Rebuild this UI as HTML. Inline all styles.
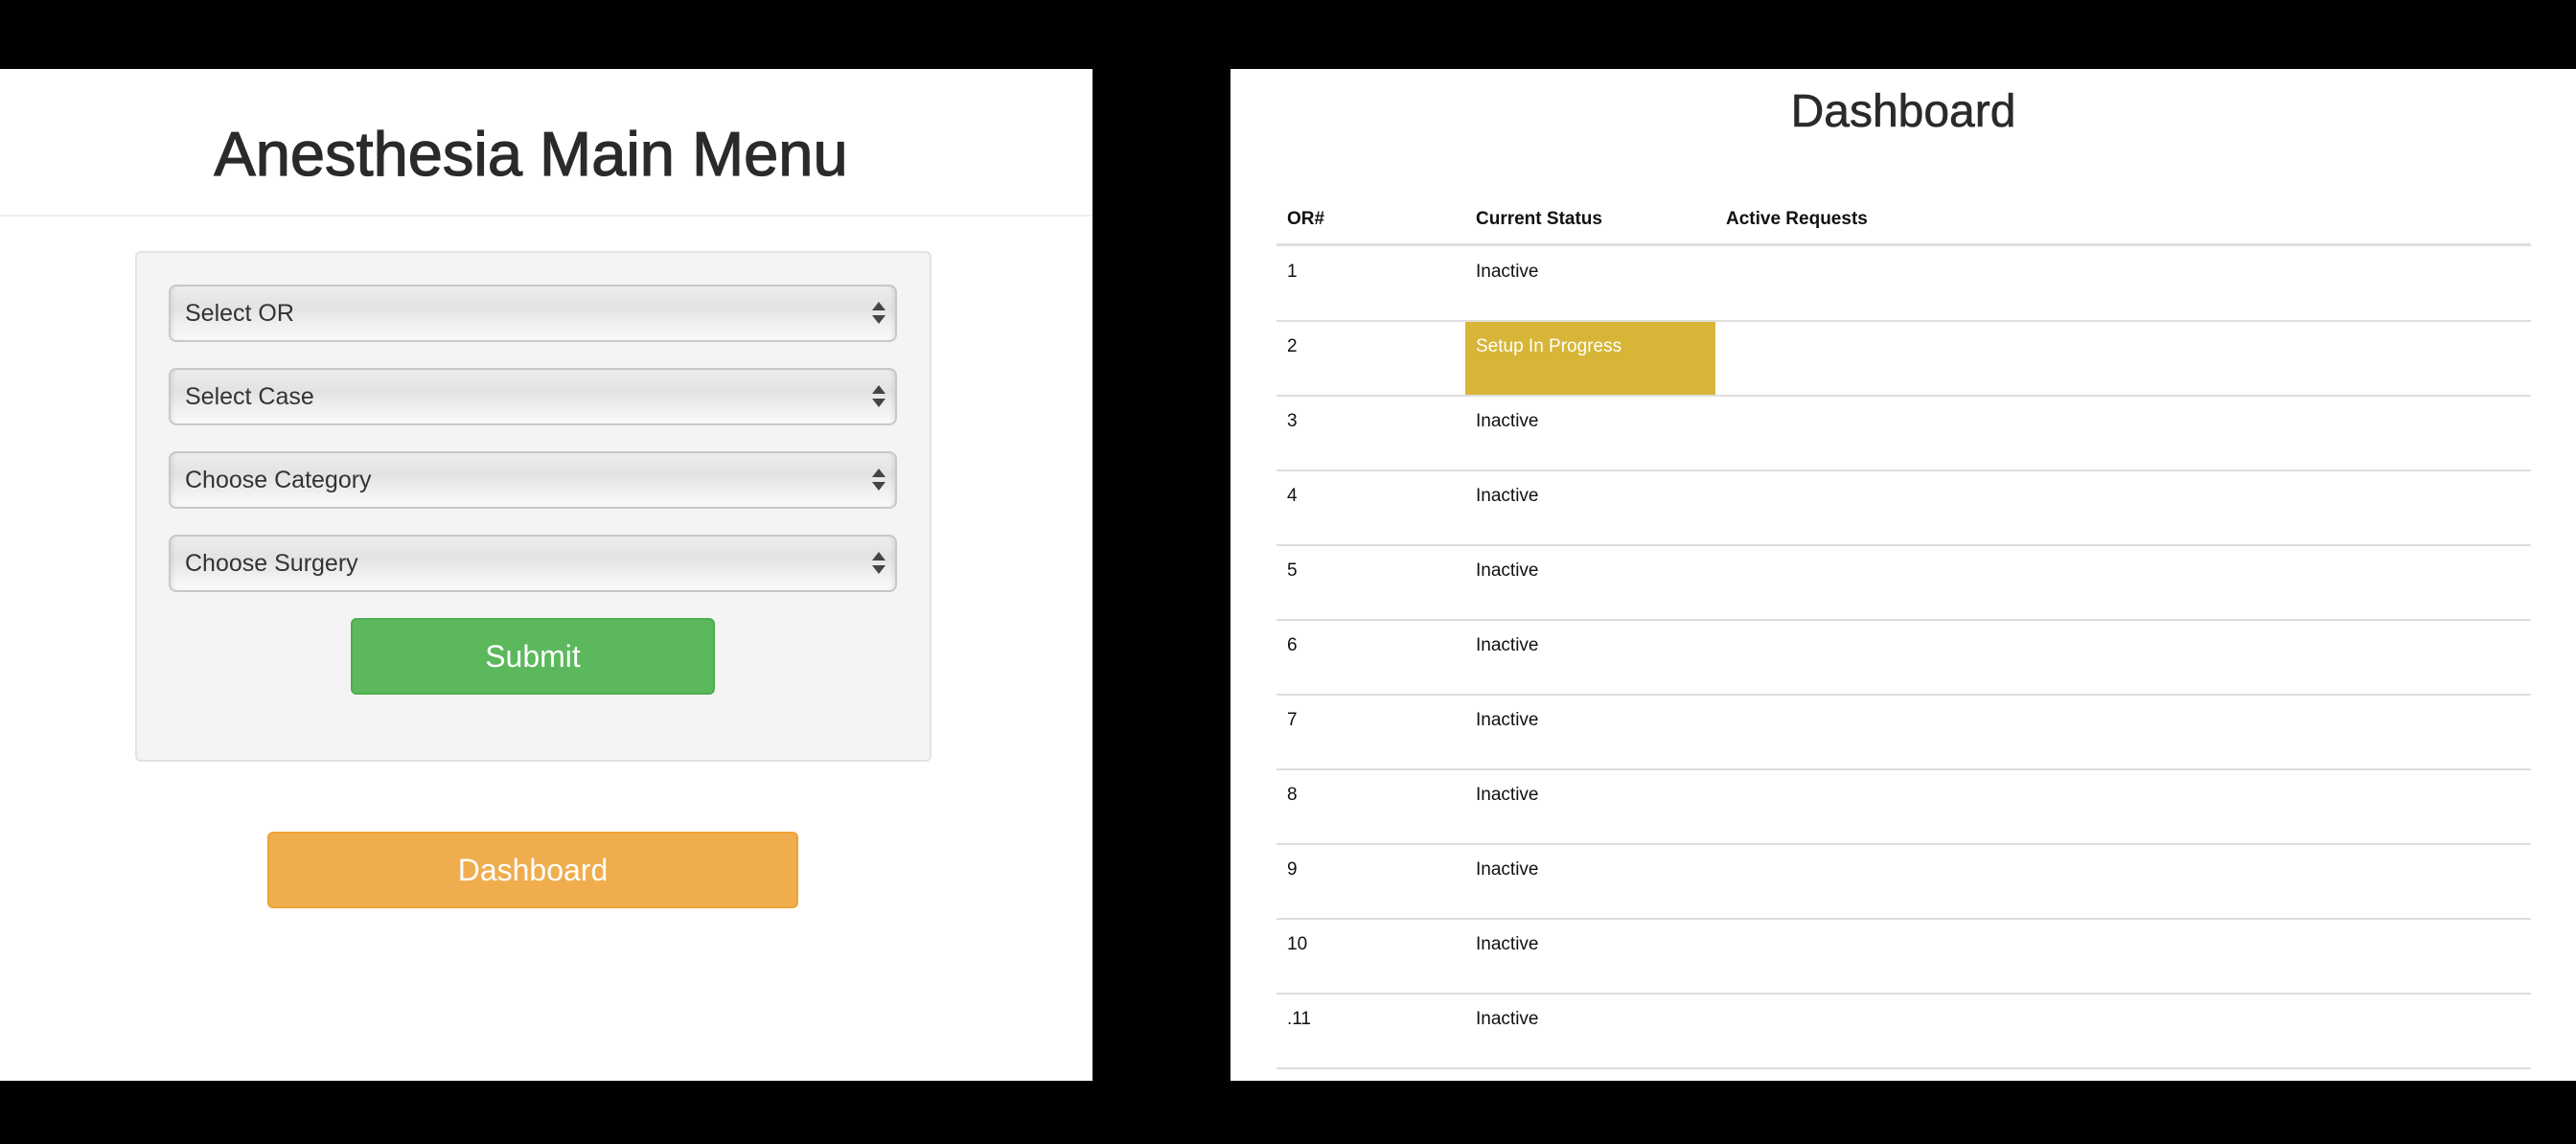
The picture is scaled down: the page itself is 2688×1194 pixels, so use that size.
<!DOCTYPE html>
<html><head><meta charset="utf-8"><style>
*{margin:0;padding:0;box-sizing:border-box}
body{width:2688px;height:1194px;background:#000;position:relative;overflow:hidden;font-family:"Liberation Sans",Arial,sans-serif;color:#333}
.a{position:absolute}
.lp{left:0;top:72px;width:1140px;height:1056px;background:#fff}
.rp{left:1284px;top:72px;width:1404px;height:1056px;background:#fff}
.sel{position:absolute;left:176px;width:760px;height:60px;border:2px solid #c8c8c8;border-radius:8px;background:linear-gradient(#ececec,#e3e3e3 40%,#f3f3f3 80%,#fafafa);box-shadow:inset 4px 0 4px -2px rgba(0,0,0,.08),inset -4px 0 4px -2px rgba(0,0,0,.08);font-size:25px;color:#333;line-height:56px;padding-left:15px}
.sel:after{content:"";position:absolute;right:10px;top:16px;border-left:7px solid transparent;border-right:7px solid transparent;border-bottom:9px solid #444}
.sel:before{content:"";position:absolute;right:10px;top:30px;border-left:7px solid transparent;border-right:7px solid transparent;border-top:9px solid #444}
.line{position:absolute;left:1332px;width:1309px;height:2px;background:#dedede}
.t{position:absolute;font-size:19px;color:#111;line-height:20px}
.h{position:absolute;font-size:19px;font-weight:bold;color:#111}
</style></head><body>
<div class="a lp"></div>
<div class="a rp"></div>
<div class="a" style="left:0;top:126px;width:1108px;text-align:center;font-size:65px;line-height:70px;color:#2a2a2a;-webkit-text-stroke:1.2px #2a2a2a">Anesthesia Main Menu</div>
<div class="a" style="left:0;top:224px;width:1140px;height:2px;background:#eee"></div>
<div class="a" style="left:141px;top:262px;width:831px;height:533px;background:#f4f4f4;border:2px solid #e3e3e3;border-radius:6px"></div>
<div class="sel" style="top:297px">Select OR</div>
<div class="sel" style="top:384px">Select Case</div>
<div class="sel" style="top:471px">Choose Category</div>
<div class="sel" style="top:558px">Choose Surgery</div>
<div class="a" style="left:366px;top:645px;width:380px;height:80px;background:#5cb85c;border:2px solid #4cae4c;border-radius:6px;color:#fff;font-size:32px;line-height:76px;text-align:center">Submit</div>
<div class="a" style="left:279px;top:868px;width:554px;height:80px;background:#f0ad4e;border:2px solid #eea236;border-radius:6px;color:#fff;font-size:32px;line-height:76px;text-align:center">Dashboard</div>

<div class="a" style="left:1284px;top:89px;width:1404px;text-align:center;font-size:48px;line-height:56px;color:#2a2a2a;-webkit-text-stroke:0.6px #2a2a2a">Dashboard</div>
<div class="h" style="left:1343px;top:218px">OR#</div>
<div class="h" style="left:1540px;top:218px">Current Status</div>
<div class="h" style="left:1801px;top:218px">Active Requests</div>
<div class="line" style="top:254px;height:3px"></div>
<div class="a" style="left:1529px;top:335px;width:261px;height:77px;background:#d7b637"></div>
<div id="rows"></div>
<script>
var s='';var labels=['1','2','3','4','5','6','7','8','9','10','.11'];
for(var i=0;i<11;i++){var y=256+i*78;
s+='<div class="t" style="left:1343px;top:'+(y+18)+'px">'+labels[i]+'</div>';
s+='<div class="t" style="left:1540px;top:'+(y+18)+'px;'+(i==1?'color:#fff':'')+'">'+(i==1?'Setup In Progress':'Inactive')+'</div>';
s+='<div class="line" style="top:'+(y+78)+'px"></div>';}
document.getElementById('rows').innerHTML=s;
</script>
</body></html>
